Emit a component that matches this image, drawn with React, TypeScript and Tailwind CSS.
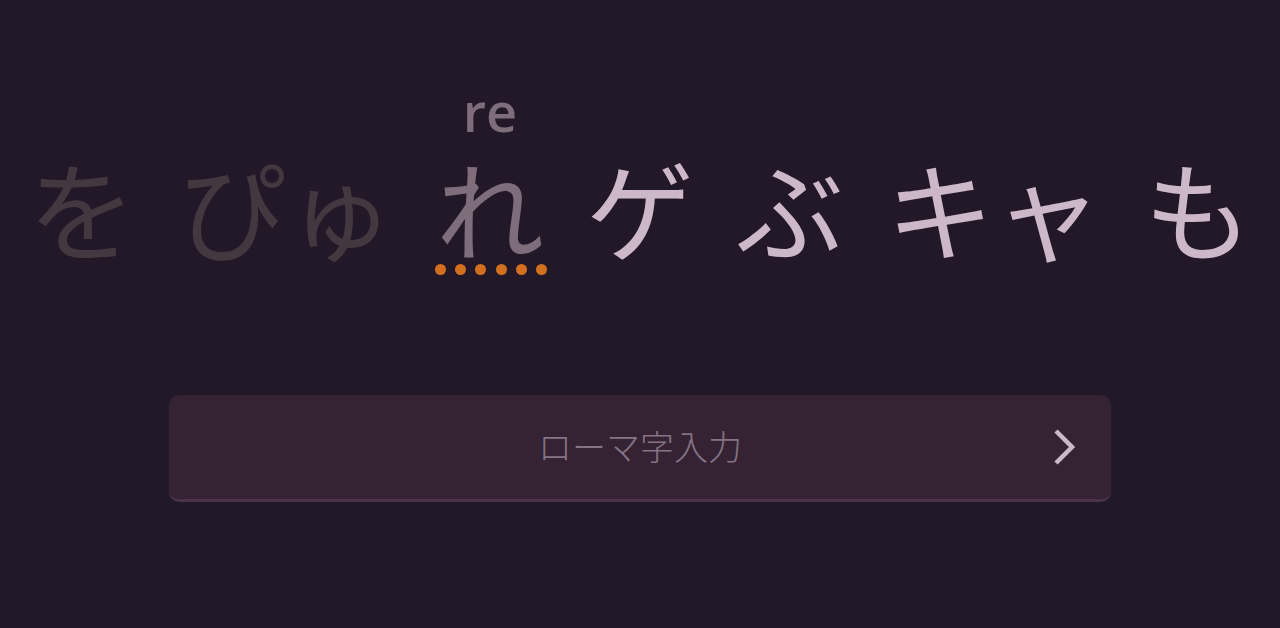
type Unit = {
    text: string;
    state: 'done' | 'current' | 'todo';
    romaji?: string;
};

const units: Unit[] = [
    {text: 'を', state: 'done'},
    {text: 'ぴゅ', state: 'done'},
    {text: 'れ', state: 'current', romaji: 're'},
    {text: 'ゲ', state: 'todo'},
    {text: 'ぶ', state: 'todo'},
    {text: 'キャ', state: 'todo'},
    {text: 'も', state: 'todo'},
];

const colorFor = {
    done: 'text-[#433840]',
    current: 'text-[#7e6d7b]',
    todo: 'text-[#cdb8c9]',
};

const App = () => {
    return (
        <div
            className="w-full h-[628px] overflow-hidden bg-[#221827] flex flex-col items-center"
            style={{fontFamily: '"Noto Sans CJK JP", "Noto Sans", sans-serif'}}
        >
            {/* kana line */}
            <div className="mt-[152px] flex justify-center gap-[42px] whitespace-nowrap">
                {units.map((u, i) => (
                    <span key={i} className={`relative text-[108px] leading-none ${colorFor[u.state]}`}>
                        {u.state === 'current' && (
                            <>
                                <span
                                    className="absolute left-1/2 -translate-x-1/2 -top-[60px] text-[54px] leading-[38px] font-semibold text-[#7e6d7b]"
                                    style={{fontFamily: '"Open Sans", sans-serif'}}
                                >
                                    {u.romaji}
                                </span>
                                <span className="absolute left-[-1px] right-[-3px] bottom-[-15px] flex justify-between">
                                    {[0, 1, 2, 3, 4, 5].map((d) => (
                                        <span key={d} className="w-[11px] h-[11px] rounded-full bg-[#d2701f]"/>
                                    ))}
                                </span>
                            </>
                        )}
                        {u.text}
                    </span>
                ))}
            </div>

            {/* input */}
            <div className="mt-[135px] w-[942px] h-[107px] rounded-[10px] bg-[#352334] border-b-[3px] border-[#4a344a] relative flex items-center justify-center">
                <span className="text-[34px] text-[#857483] font-light -mt-[4px]">ローマ字入力</span>
                <svg
                    className="absolute right-[33px] top-1/2 -translate-y-1/2"
                    width="26"
                    height="38"
                    viewBox="0 0 26 38"
                    fill="none"
                    stroke="#cdb8c9"
                    strokeWidth="4.5"
                    strokeLinecap="butt"
                    strokeLinejoin="miter"
                >
                    <path d="M4 3 L20 19 L4 35"/>
                </svg>
            </div>
        </div>
    );
};

export default App;
